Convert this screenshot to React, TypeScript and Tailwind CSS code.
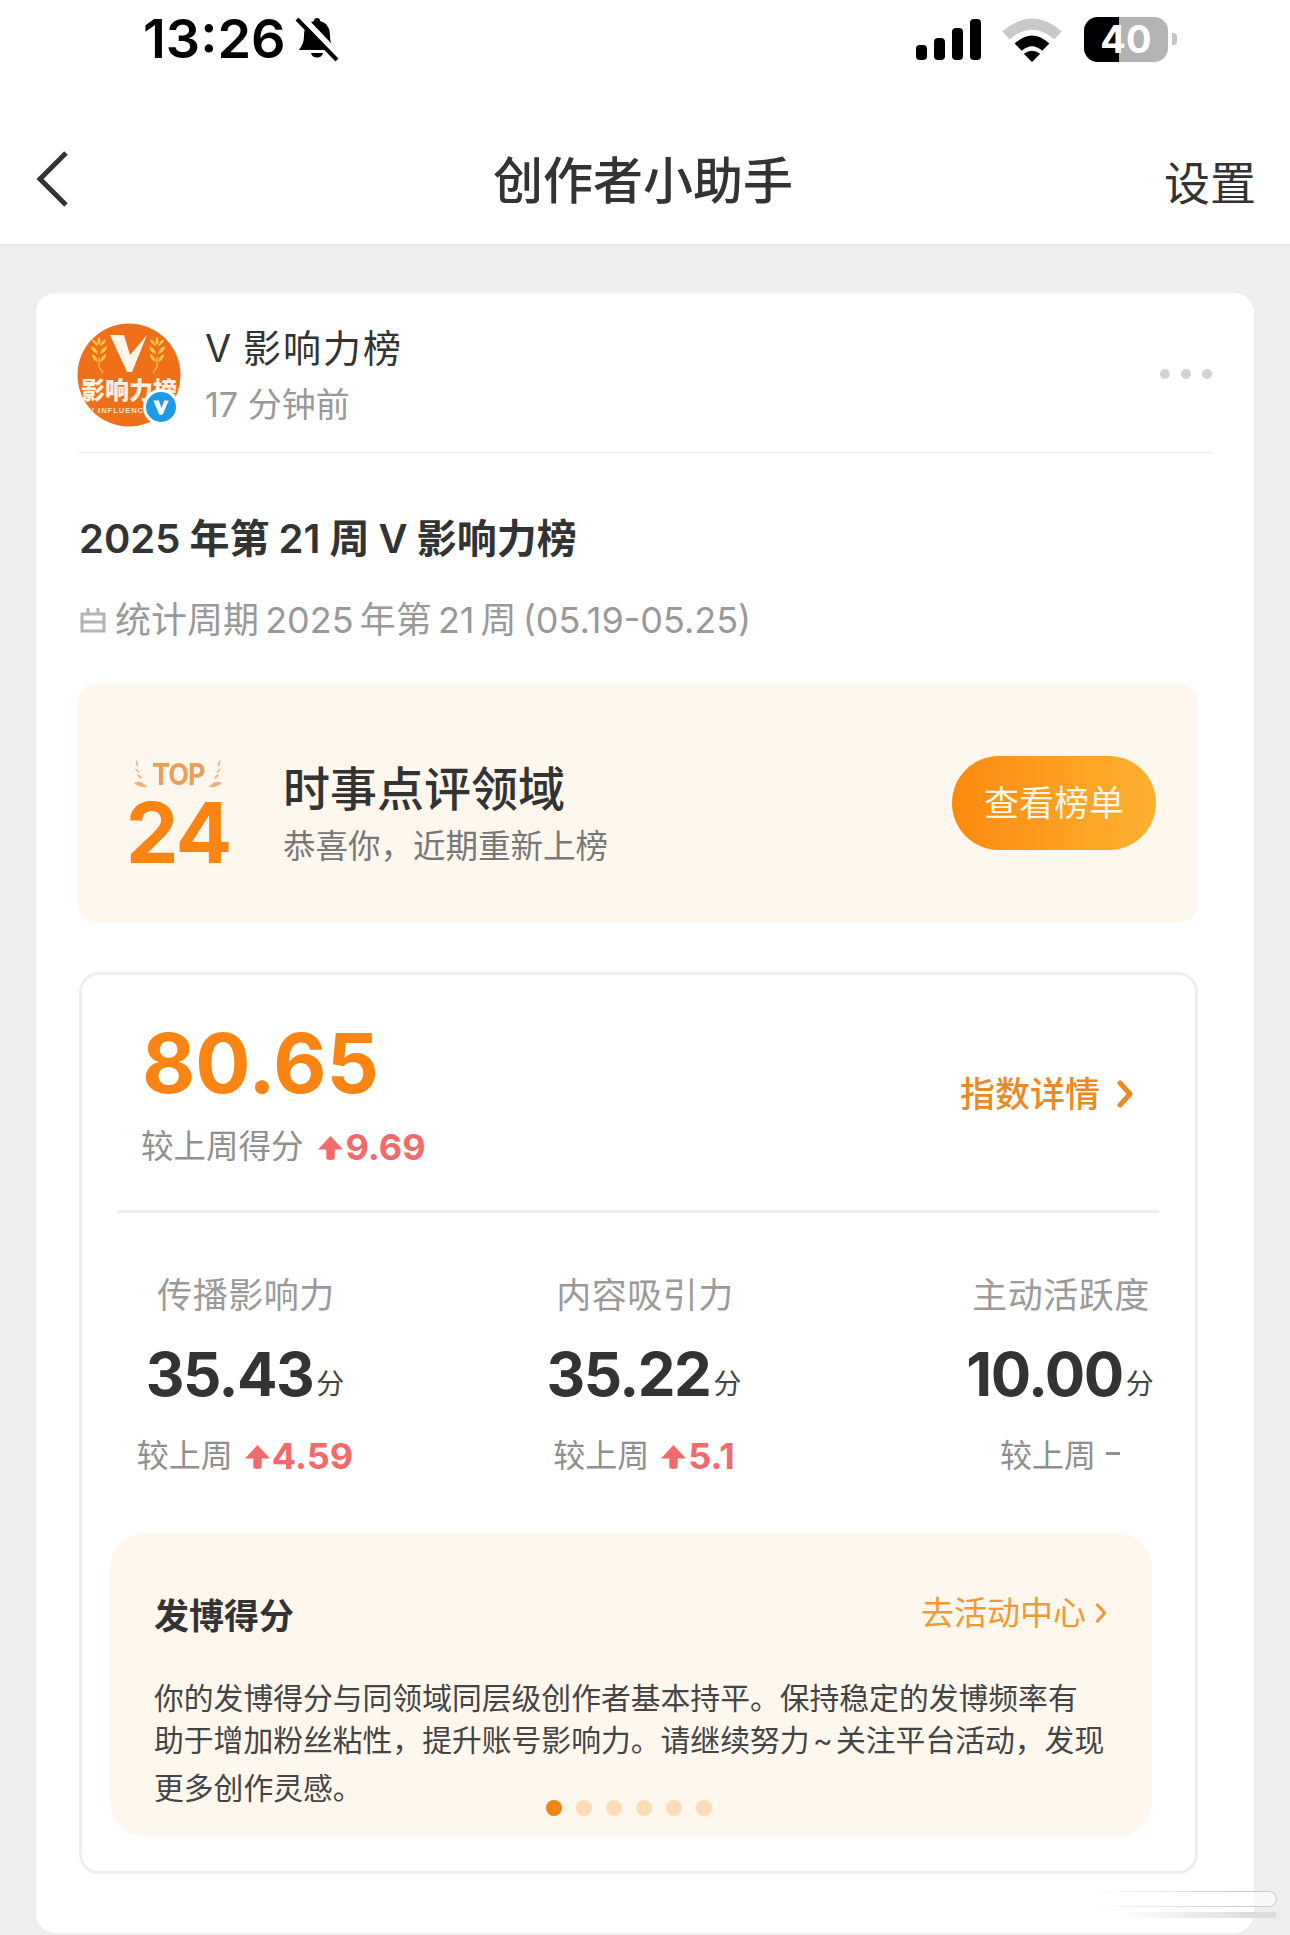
import React from "react";

function UpArrow({ className }: { className: string }) {
  return (
    <svg viewBox="0 0 24 24" className={className}>
      <path d="M12 1 L24 14 L16 14 L16 23 Q12 25 8 23 L8 14 L0 14 Z" fill="#f26a6a" />
    </svg>
  );
}

function Chevron({ className, color, width = 4 }: { className: string; color: string; width?: number }) {
  return (
    <svg viewBox="0 0 16 28" className={className} fill="none">
      <path d="M3 3 L13 14 L3 25" stroke={color} strokeWidth={width} strokeLinecap="round" strokeLinejoin="round" />
    </svg>
  );
}

function AvatarWheat({ x, flip }: { x: number; flip?: boolean }) {
  return (
    <g transform={`translate(${x} 14) ${flip ? "scale(-1 1)" : ""}`} fill="#f7c84a">
      <path d="M0 0 Q3 4 0 8 Q-3 4 0 0 Z" />
      <path d="M-1 9 Q-7 7 -7 2 Q-2 4 -1 9 Z" />
      <path d="M1 9 Q7 7 7 2 Q2 4 1 9 Z" />
      <path d="M-1 17 Q-8 15 -8 9 Q-2 11 -1 17 Z" />
      <path d="M1 17 Q8 15 8 9 Q2 11 1 17 Z" />
      <path d="M-1 25 Q-7 23 -7 17 Q-2 19 -1 25 Z" />
      <path d="M1 25 Q7 23 7 17 Q2 19 1 25 Z" />
      <path d="M0 20 L0 30 L4 36" stroke="#f7c84a" strokeWidth="1.2" fill="none" />
    </g>
  );
}

function Avatar() {
  return (
    <div className="relative w-[104px] h-[104px] shrink-0 ml-[-1px]">
      <svg viewBox="0 0 104 104" className="w-[104px] h-[104px]">
        <circle cx="52" cy="52" r="51.5" fill="#f0701a" />
        <path d="M33 12 L47 12 L53 32 L70 12 L55 49 L50 49 Z" fill="#fff6ea" />
        <AvatarWheat x={22} />
        <AvatarWheat x={80} flip />
        <text x="52" y="76" textAnchor="middle" fontSize="24" fontWeight="800" fill="#fff1e0" fontFamily="Noto Sans CJK SC">影响力榜</text>
        <text x="12" y="90" fontSize="7.5" fontWeight="600" letterSpacing="1" fill="#fde3c8" fontFamily="Liberation Sans">V INFLUENCE</text>
      </svg>
      <div className="absolute left-[66px] top-[66px] w-[36px] h-[36px] rounded-full bg-[#1e9be8] border-[3px] border-white flex items-center justify-center">
        <svg viewBox="0 0 20 20" className="w-[22px] h-[22px]">
          <path d="M3 4 L8 4 L10.5 11 L13 4 L17 4 L11.5 17 L8.5 17 Z" fill="#fff" />
        </svg>
      </div>
    </div>
  );
}

function Laurel({ flip }: { flip?: boolean }) {
  return (
    <svg viewBox="0 0 18 30" className={`w-[18px] h-[30px] ${flip ? "-scale-x-100" : ""}`}>
      <g fill="#f0b27a">
        <path d="M6 1 Q9 5 8 8 Q5 5 6 1 Z" />
        <path d="M5 9 Q9 11 10 14 Q6 13 5 9 Z" />
        <path d="M7 15 Q11 16 12 20 Q8 19 7 15 Z" />
        <path d="M4 24 Q11 20 17 28 Q9 29 4 24 Z" />
      </g>
    </svg>
  );
}

function Stat({ label, value, delta, className }: { label: string; value: string; delta?: string; className: string }) {
  return (
    <div className={`flex flex-col items-center ${className}`}>
      <div className="text-[35px] leading-[46px] text-[#9a9a9a] tracking-[0.5px] whitespace-nowrap ml-[2px] mt-[-1px]">{label}</div>
      <div className="mt-[24px] flex items-end h-[64px]">
        <span className="text-[60px] leading-[64px] font-bold text-[#333] tracking-[-1.5px]">{value}</span>
        <span className="text-[28px] leading-[32px] text-[#444] ml-[3px] mb-[6px]">分</span>
      </div>
      <div className="mt-[30px] flex items-center h-[40px]">
        <span className="text-[32px] text-[#8f8f8f]">较上周</span>
        {delta ? (
          <>
            <UpArrow className="w-[25px] h-[25px] ml-[12px] mr-[2px]" />
            <span className="text-[36px] font-bold text-[#f26a6a]">{delta}</span>
          </>
        ) : (
          <span className="w-[14px] h-[3px] bg-[#8f8f8f] ml-[10px] mb-[6px]" />
        )}
      </div>
    </div>
  );
}

export default function App() {
  return (
    <div className="w-[1290px] h-[1935px] overflow-hidden bg-[#eeeeee] relative font-['Inter','Noto_Sans_CJK_SC',sans-serif]">
      {/* top bars */}
      <div className="bg-white h-[245px] border-b border-[#e6e6e6]">
        <div className="h-[125px] flex items-start pt-[17px] pl-[143px] pr-[113px] justify-between">
          <div className="flex items-center h-[44px]">
            <span className="text-[54px] leading-[44px] font-semibold text-black">13:26</span>
            <svg viewBox="0 0 44 46" className="w-[44px] h-[46px] ml-[9px]">
              <path d="M22 2 C24 2 25 3 25 5 C32 7 35 12 35 20 C35 27 38 31 40 34 L4 34 C6 31 9 27 9 20 C9 12 12 7 19 5 C19 3 20 2 22 2 Z" fill="#000" />
              <path d="M16 37 L28 37 C27 43 17 43 16 37 Z" fill="#000" />
              <path d="M4 0 L44 42" stroke="#fff" strokeWidth="9" />
              <path d="M2 3 L42 44" stroke="#000" strokeWidth="4" />
            </svg>
          </div>
          <div className="flex items-center h-[44px]">
            <div className="flex items-end gap-[7px] h-[41px]">
              <span className="w-[11px] h-[15px] rounded-[4px] bg-black" />
              <span className="w-[11px] h-[22px] rounded-[4px] bg-black" />
              <span className="w-[11px] h-[32px] rounded-[4px] bg-black" />
              <span className="w-[11px] h-[41px] rounded-[4px] bg-black" />
            </div>
            <svg viewBox="0 0 58 44" className="w-[60px] h-[45px] ml-[21px]">
              <path d="M0 14 Q29 -11 58 14 L51 22 Q29 3 7 22 Z" fill="#c9c9c9" />
              <path d="M12 26 Q29 10 46 26 L39 33 Q29 24 19 33 Z" fill="#000" />
              <path d="M21 36 Q29 30 37 36 L29 44 Z" fill="#000" />
            </svg>
            <div className="relative ml-[22px] w-[84px] h-[45px] rounded-[14px] bg-[#b3b3b3] overflow-hidden">
              <div className="w-[35px] h-[45px] bg-black" />
              <span className="absolute inset-0 flex items-center justify-center text-[38px] leading-[45px] font-bold text-white">40</span>
            </div>
            <span className="ml-[4px] w-[5px] h-[12px] rounded-r-[4px] bg-[#c4c4c4]" />
          </div>
        </div>
        <div className="h-[120px] flex items-start justify-between pl-[36px] pr-[34px] relative">
          <svg viewBox="0 0 32 56" className="w-[32px] h-[56px] mt-[26px]" fill="none">
            <path d="M30 2 L4 28 L30 54" stroke="#333" strokeWidth="5" />
          </svg>
          <div className="absolute left-[493px] top-[26px] text-[50px] leading-[60px] font-medium text-[#333]">创作者小助手</div>
          <div className="text-[46px] leading-[60px] text-[#333] mt-[28px]">设置</div>
        </div>
      </div>

      {/* card */}
      <div className="mt-[48px] mx-[36px] bg-white rounded-[20px] h-[1640px] pl-[42px] pr-[42px]">
        <div className="h-[160px] border-b border-[#ececec] flex items-start pt-[30px]">
          <Avatar />
          <div className="ml-[24px] flex-1">
            <div className="text-[38px] leading-[46px] text-[#333] tracking-[2px] mt-[2px] [word-spacing:-3px]">V 影响力榜</div>
            <div className="text-[34px] leading-[44px] text-[#999] mt-[12px]">17 分钟前</div>
          </div>
          <div className="flex gap-[11px] mt-[46px]">
            <span className="w-[10px] h-[10px] rounded-full bg-[#d3d3d3]" />
            <span className="w-[10px] h-[10px] rounded-full bg-[#d3d3d3]" />
            <span className="w-[10px] h-[10px] rounded-full bg-[#d3d3d3]" />
          </div>
        </div>

        <div className="mt-[61px] text-[40px] leading-[50px] font-semibold text-[#333] ml-[1px] [word-spacing:-1px]">2025 年第 21 周 V 影响力榜</div>

        <div className="mt-[31px] flex items-center h-[50px] text-[36px] text-[#999] ml-[1px] [word-spacing:-4px] whitespace-nowrap">
          <svg viewBox="0 0 28 28" className="w-[28px] h-[28px] mr-[8px]" fill="none">
            <path d="M3 8 L25 8 L25 25 L3 25 Z M3 16 L25 16" stroke="#b3b3b3" strokeWidth="3" />
            <path d="M9 2 L9 9 M19 2 L19 9" stroke="#b3b3b3" strokeWidth="3" />
          </svg>
          统计周期 2025 年第 21 周 (05.19-05.25)
        </div>

        {/* banner */}
        <div className="mt-[38px] w-[1120px] h-[240px] rounded-[20px] bg-[#fef7ee] flex items-center pl-[46px]">
          <div className="w-[108px] flex flex-col items-center mt-[22px]">
            <div className="flex items-center gap-[1px] h-[34px]">
              <Laurel />
              <span className="text-[30px] leading-[34px] font-bold text-[#ec9d5a] scale-x-90 tracking-[-1px]">TOP</span>
              <Laurel flip />
            </div>
            <div className="text-[84px] leading-[76px] font-bold text-[#fb8412] mt-[4px] tracking-[-2px]">24</div>
          </div>
          <div className="ml-[51px] flex-1 mt-[22px]">
            <div className="text-[47px] leading-[58px] font-medium text-[#333]">时事点评领域</div>
            <div className="text-[32.5px] leading-[44px] text-[#777] mt-[7px]">恭喜你，近期重新上榜</div>
          </div>
          <div className="w-[204px] h-[94px] rounded-full bg-gradient-to-r from-[#fb8a0c] to-[#fdb130] flex items-center justify-center mr-[42px] text-[35px] text-[#fff6e8]">
            查看榜单
          </div>
        </div>

        {/* score box */}
        <div className="mt-[49px] w-[1119px] h-[902px] border-[3px] border-[#eeeeee] rounded-[20px] ml-[1px] relative">
          <div className="ml-[35px] mr-[36px] h-[238px] border-b-[3px] border-[#eeeeee] flex items-start justify-between">
            <div className="ml-[25px]">
              <div className="text-[82px] leading-[84px] font-bold text-[#fb8412] mt-[47px]">80.65</div>
              <div className="flex items-center h-[44px] mt-[19px] ml-[-1px]">
                <span className="text-[32.5px] text-[#8f8f8f]">较上周得分</span>
                <UpArrow className="w-[25px] h-[25px] ml-[14px] mr-[3px]" />
                <span className="text-[36px] font-bold text-[#f26a6a]">9.69</span>
              </div>
            </div>
            <div className="flex items-center mt-[94px] mr-[26px]">
              <span className="text-[35px] leading-[50px] font-medium text-[#ea8a24]">指数详情</span>
              <Chevron className="w-[16px] h-[28px] ml-[17px]" color="#ea8a24" width={5} />
            </div>
          </div>

          <div className="flex mt-[60px]">
            <Stat label="传播影响力" value="35.43" delta="4.59" className="w-[220px] ml-[53px]" />
            <Stat label="内容吸引力" value="35.22" delta="5.1" className="w-[200px] ml-[189px]" />
            <Stat label="主动活跃度" value="10.00" className="w-[200px] ml-[216px]" />
          </div>

          <div className="absolute left-[28px] top-[558px] w-[1042px] h-[304px] rounded-[36px] bg-[#fef7ee] pl-[44px]">
            <div className="flex justify-between items-start pt-[58px] pr-[45px]">
              <div className="text-[35px] leading-[50px] font-semibold text-[#333]">发博得分</div>
              <div className="flex items-center mt-[-3px]">
                <span className="text-[33px] leading-[50px] text-[#f19a33]">去活动中心</span>
                <Chevron className="w-[12px] h-[22px] ml-[9px]" color="#f19a33" width={4} />
              </div>
            </div>
            <div className="mt-[36px] text-[29.8px] leading-[42px] text-[#444]">
              <div className="whitespace-nowrap">你的发博得分与同领域同层级创作者基本持平。保持稳定的发博频率有</div>
              <div className="whitespace-nowrap [word-spacing:-5px]">助于增加粉丝粘性，提升账号影响力。请继续努力 ~ 关注平台活动，发现</div>
              <div className="whitespace-nowrap mt-[6px]">更多创作灵感。</div>
            </div>
            <div className="absolute left-[436px] top-[267px] flex gap-[14px]">
              <span className="w-[16px] h-[16px] rounded-full bg-[#ee8414]" />
              <span className="w-[16px] h-[16px] rounded-full bg-[#fddcb6]" />
              <span className="w-[16px] h-[16px] rounded-full bg-[#fddcb6]" />
              <span className="w-[16px] h-[16px] rounded-full bg-[#fddcb6]" />
              <span className="w-[16px] h-[16px] rounded-full bg-[#fddcb6]" />
              <span className="w-[16px] h-[16px] rounded-full bg-[#fddcb6]" />
            </div>
          </div>
        </div>
      </div>

      {/* faint smeared watermark over the bottom right corner */}
      <div className="absolute left-[1090px] top-[1891px] w-[187px] h-[16px] rounded-r-[8px] border border-l-0 border-[#c8c8c8] bg-white/60 blur-[0.7px] [mask-image:linear-gradient(to_right,transparent,black_85%)]" />
      <div className="absolute left-[1120px] top-[1912px] w-[157px] h-[6px] rounded-r-[3px] bg-[#dcdcdc] blur-[0.7px] [mask-image:linear-gradient(to_right,transparent,black_85%)]" />
    </div>
  );
}
